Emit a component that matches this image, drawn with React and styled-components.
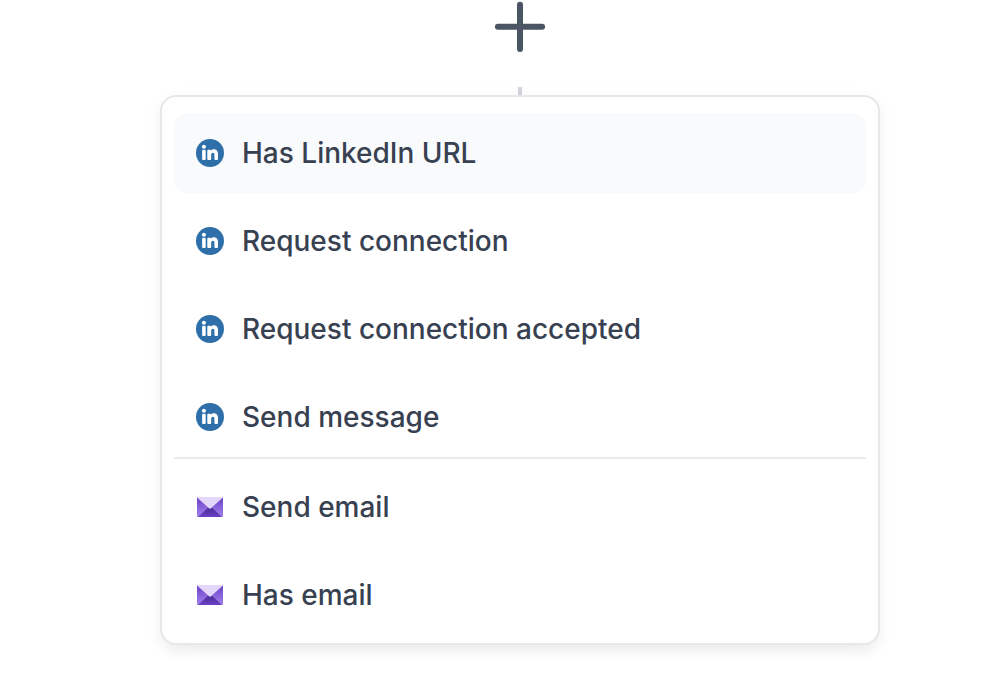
import React from "react";
import styled, { createGlobalStyle, css } from "styled-components";

const GlobalStyle = createGlobalStyle`
  *, *::before, *::after { box-sizing: border-box; }
  body {
    margin: 0;
    background: #ffffff;
    font-family: Inter, "Liberation Sans", sans-serif;
    color: #374151;
  }
`;

const Page = styled.main`
  display: flex;
  flex-direction: column;
  align-items: center;
  padding: 0 0 40px 40px;
`;

const AddButton = styled.button`
  display: flex;
  padding: 0;
  border: 0;
  background: none;
  color: #4b5563;
  cursor: pointer;
`;

const Connector = styled.div`
  width: 4px;
  height: 8px;
  margin-top: 33px;
  background: #d1d5db;
`;

const Menu = styled.div`
  width: 100%;
  max-width: 720px;
  padding: 16px 12px 8px;
  border: 2px solid #e5e7eb;
  border-radius: 16px;
  background: #ffffff;
  box-shadow: 0 8px 12px -2px rgba(0, 0, 0, 0.05), 0 4px 20px rgba(0, 0, 0, 0.04);
`;

const Group = styled.div`
  display: flex;
  flex-direction: column;
  gap: 8px;

  & + & {
    padding-top: 8px;
    border-top: 2px solid #e9eaee;
  }
`;

const Item = styled.button`
  display: flex;
  align-items: center;
  gap: 18px;
  height: 80px;
  padding: 0 22px;
  border: 0;
  border-radius: 12px;
  background: transparent;
  color: inherit;
  font-family: inherit;
  font-size: 28px;
  font-weight: 500;
  line-height: 40px;
  text-align: left;
  cursor: pointer;
  ${({ $active }) => $active && css`background: #f9fafb;`}
`;

const PlusIcon = () => (
  <svg width="54" height="54" viewBox="0 0 54 54" fill="none" stroke="currentColor" strokeWidth="6" strokeLinecap="round" aria-hidden="true">
    <path d="M27 4.7v44.2M4.9 26.7h44.2" />
  </svg>
);

const LinkedInIcon = () => (
  <svg width="28" height="28" viewBox="0 0 28 28" aria-hidden="true">
    <circle cx="14" cy="14" r="14" fill="#2e6fa9" />
    <circle cx="7.9" cy="7.7" r="2" fill="#fff" />
    <rect x="6.1" y="10.7" width="3.6" height="10.4" rx="1" fill="#fff" />
    <path
      fill="#fff"
      d="M12.3 10.7h1.7q1 0 1 .9v.1c.7-.9 1.7-1.4 2.9-1.4 2.7 0 4.1 1.9 4.1 4.6v5.2q0 1-1 1h-1.6q-1 0-1-1v-4.4c0-1.3-.5-2-1.5-2s-1.7.8-1.7 2v4.4q0 1-1 1h-1.9q-1 0-1-1v-8.4q0-1 1-1z"
    />
  </svg>
);

const MailIcon = ({ id }) => (
  <svg width="28" height="28" viewBox="0 0 28 28" aria-hidden="true">
    <defs>
      <linearGradient id={`${id}-side`} x1="0" y1="0" x2="0" y2="1">
        <stop offset="0" stopColor="#6a40c8" />
        <stop offset="1" stopColor="#a482ea" />
      </linearGradient>
      <linearGradient id={`${id}-base`} x1="0" y1="0" x2="0" y2="1">
        <stop offset="0" stopColor="#43278a" />
        <stop offset="1" stopColor="#6c40c8" />
      </linearGradient>
    </defs>
    <rect x="1" y="4" width="26" height="20" rx="1" fill={`url(#${id}-side)`} />
    <path d="M2 24 14 13 26 24z" fill={`url(#${id}-base)`} />
    <path d="M1.6 4h24.8q.6 0 .3.7L14.7 15.4q-.7.6-1.4 0L1.3 4.7Q1 4 1.6 4z" fill="#e5d7fa" />
  </svg>
);

const linkedInSteps = ["Has LinkedIn URL", "Request connection", "Request connection accepted", "Send message"];
const emailSteps = ["Send email", "Has email"];

export default function App() {
  return (
    <>
      <GlobalStyle />
      <Page>
        <AddButton type="button" aria-label="Add step">
          <PlusIcon />
        </AddButton>
        <Connector />
        <Menu>
          <Group>
            {linkedInSteps.map((label, i) => (
              <Item key={label} type="button" $active={i === 0}>
                <LinkedInIcon />
                {label}
              </Item>
            ))}
          </Group>
          <Group>
            {emailSteps.map((label, i) => (
              <Item key={label} type="button">
                <MailIcon id={`mail-${i}`} />
                {label}
              </Item>
            ))}
          </Group>
        </Menu>
      </Page>
    </>
  );
}
